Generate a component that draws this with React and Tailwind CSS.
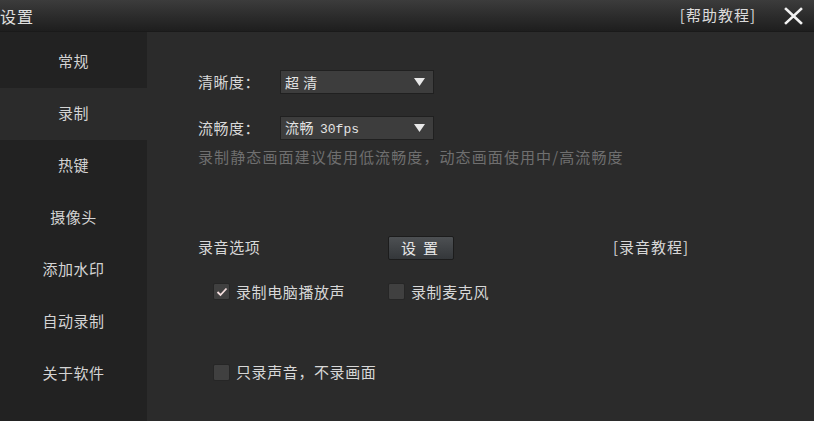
import React from 'react';

const font = { fontFamily: '"Noto Sans CJK SC", "Liberation Sans", sans-serif' };

function Select({ value, mono }) {
  return (
    <div className="flex h-[24px] w-[154px] items-center justify-between border border-[#202020] bg-[#3d3d3d] pl-[4px] pr-[8px] text-[14px] tracking-[0.5px] text-[#e4e4e4]">
      <span>
        {value}
        {mono && <span className="ml-[6px] text-[13px] tracking-[0px]" style={{ fontFamily: '"Liberation Mono", monospace' }}>{mono}</span>}
      </span>
      <svg width="11" height="8" viewBox="0 0 11 8">
        <path d="M0 0 H11 L5.5 8 Z" fill="#e8e8e8" />
      </svg>
    </div>
  );
}

function Check({ checked, label }) {
  return (
    <div className="flex items-center gap-[6px]">
      <span className="flex h-[17px] w-[17px] items-center justify-center rounded-[2px] border border-[#262626] bg-[#404040]">
        {checked && (
          <svg width="12" height="10" viewBox="0 0 12 10">
            <path d="M1.5 5 L4.5 8 L10.5 1.5" fill="none" stroke="#f4dede" strokeWidth="1.8" />
          </svg>
        )}
      </span>
      <span className="text-[15px] tracking-[0.6px] text-[#d8d8d8]">{label}</span>
    </div>
  );
}

export default function App() {
  const menu = ['常规', '录制', '热键', '摄像头', '添加水印', '自动录制', '关于软件'];

  return (
    <div className="flex h-[421px] w-[814px] flex-col overflow-hidden bg-[#2b2b2b]" style={font}>
      {/* title bar */}
      <div className="flex h-[32px] shrink-0 items-center justify-between border-b border-[#1a1a1a] bg-gradient-to-b from-[#3c3c3c] to-[#1e1e1e] pr-[11px]">
        <span className="text-[16px] tracking-[1px] text-[#e0e0e0]">设置</span>
        <div className="flex items-center gap-[28px]">
          <span className="text-[15px] tracking-[1px] text-[#dcdcdc]">[帮助教程]</span>
          <svg width="19" height="18" viewBox="0 0 19 18">
            <path d="M2 2 L17 16 M17 2 L2 16" stroke="#f2f2f2" strokeWidth="2.6" strokeLinecap="square" />
          </svg>
        </div>
      </div>

      <div className="flex flex-1">
        {/* sidebar */}
        <div className="flex w-[147px] shrink-0 flex-col bg-[#222222] pt-[4px]">
          {menu.map((m, i) => (
            <div
              key={m}
              className={`flex h-[52px] items-center justify-center pb-[2px] text-[15px] tracking-[0.5px] text-[#d4d4d4] ${
                i === 1 ? 'bg-[#2b2b2b]' : ''
              }`}
            >
              {m}
            </div>
          ))}
        </div>

        {/* content */}
        <div className="flex flex-1 flex-col pl-[51px] pt-[38px] text-[#d8d8d8]">
          <div className="flex items-center">
            <span className="w-[82px] text-[15px] tracking-[0.5px]">清晰度：</span>
            <Select value="超 清" />
          </div>
          <div className="mt-[22px] flex items-center">
            <span className="w-[82px] text-[15px] tracking-[0.5px]">流畅度：</span>
            <Select value="流畅" mono="30fps" />
          </div>
          <div className="mt-[6px] text-[15px] tracking-[1.1px] text-[#6f6f6f]">
            录制静态画面建议使用低流畅度，动态画面使用中/高流畅度
          </div>

          <div className="mt-[67px] flex items-center">
            <span className="w-[190px] text-[15px] tracking-[0.6px]">录音选项</span>
            <button className="h-[24px] w-[66px] rounded-[2px] border border-[#1c1c1c] bg-gradient-to-b from-[#4d5053] to-[#34373a] pl-[4px] text-[15px] tracking-[7px] text-[#e6e6e6]">
              设置
            </button>
            <span className="ml-[159px] text-[15px] tracking-[1px] text-[#d8d8d8]">[录音教程]</span>
          </div>

          <div className="mt-[21px] flex items-center pl-[15px]">
            <div className="w-[175px]">
              <Check checked label="录制电脑播放声" />
            </div>
            <Check label="录制麦克风" />
          </div>

          <div className="mt-[58px] flex items-center pl-[15px]">
            <Check label="只录声音，不录画面" />
          </div>
        </div>
      </div>
    </div>
  );
}
